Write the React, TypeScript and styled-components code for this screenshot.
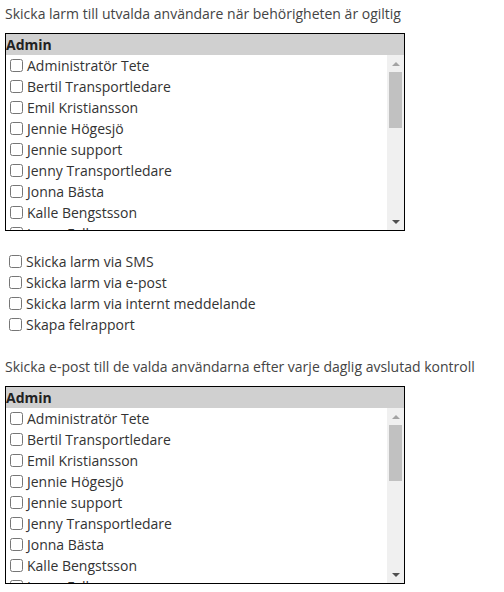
import React from "react";
import styled, { createGlobalStyle } from "styled-components";

const Global = createGlobalStyle`
  html, body { margin: 0; padding: 0; background: #fff; }
  body { font-family: "Open Sans", "Liberation Sans", sans-serif; font-size: 14px; color: #333; }
`;

const Page = styled.div`
  padding: 4px 0 0 5px;
  width: 499px;
`;

const Title = styled.p<{ $top: number }>`
  margin: ${(p) => p.$top}px 0 9px 0;
  line-height: 20px;
  font-size: 14px;
  color: #444;
  white-space: nowrap;
`;

const Box = styled.div`
  width: 398px;
  border: 1px solid #000;
  display: flex;
  flex-direction: column;
`;

const Header = styled.div`
  height: 21px;
  line-height: 21px;
  background: #d0d0d0;
  font-weight: 700;
  color: #222;
`;

const Body = styled.div`
  height: 175px;
  display: flex;
`;

const List = styled.div`
  flex: 1;
  overflow: hidden;
`;

const Bar = styled.div`
  width: 17px;
  background: #f0f0f0;
  display: flex;
  flex-direction: column;
`;

const ArrowBtn = styled.div`
  height: 17px;
  display: flex;
  align-items: center;
  justify-content: center;
`;

const Arrow = styled.div<{ $dir: "up" | "down" }>`
  width: 0;
  height: 0;
  border-left: 4px solid transparent;
  border-right: 4px solid transparent;
  ${(p) =>
    p.$dir === "up"
      ? "border-bottom: 4px solid #a3a3a3;"
      : "border-top: 4px solid #505050;"}
`;

const Track = styled.div`
  flex: 1;
  padding: 0 2px;
`;

const Thumb = styled.div`
  height: 56px;
  background: #c1c1c1;
`;

const Row = styled.label`
  display: flex;
  align-items: center;
  height: 21px;
  color: #333;
  white-space: nowrap;
`;

const Check = styled.input`
  width: 13px;
  height: 13px;
  margin: 0 4px 0 4px;
`;

const Options = styled.div`
  margin-top: 20px;
  display: flex;
  flex-direction: column;
`;

const users = [
  "Administratör Tete",
  "Bertil Transportledare",
  "Emil Kristiansson",
  "Jennie Högesjö",
  "Jennie support",
  "Jenny Transportledare",
  "Jonna Bästa",
  "Kalle Bengstsson",
  "Lasse Falk",
];

function UserBox() {
  return (
    <Box>
      <Header>Admin</Header>
      <Body>
        <List>
          {users.map((u) => (
            <Row key={u}>
              <Check type="checkbox" />
              {u}
            </Row>
          ))}
        </List>
        <Bar>
          <ArrowBtn>
            <Arrow $dir="up" />
          </ArrowBtn>
          <Track>
            <Thumb />
          </Track>
          <ArrowBtn>
            <Arrow $dir="down" />
          </ArrowBtn>
        </Bar>
      </Body>
    </Box>
  );
}

const options = [
  "Skicka larm via SMS",
  "Skicka larm via e-post",
  "Skicka larm via internt meddelande",
  "Skapa felrapport",
];

export default function App() {
  return (
    <Page>
      <Global />
      <Title $top={0}>Skicka larm till utvalda användare när behörigheten är ogiltig</Title>
      <UserBox />
      <Options>
        {options.map((o) => (
          <Row key={o}>
            <Check type="checkbox" />
            {o}
          </Row>
        ))}
      </Options>
      <Title $top={22}>Skicka e-post till de valda användarna efter varje daglig avslutad kontroll</Title>
      <UserBox />
    </Page>
  );
}
